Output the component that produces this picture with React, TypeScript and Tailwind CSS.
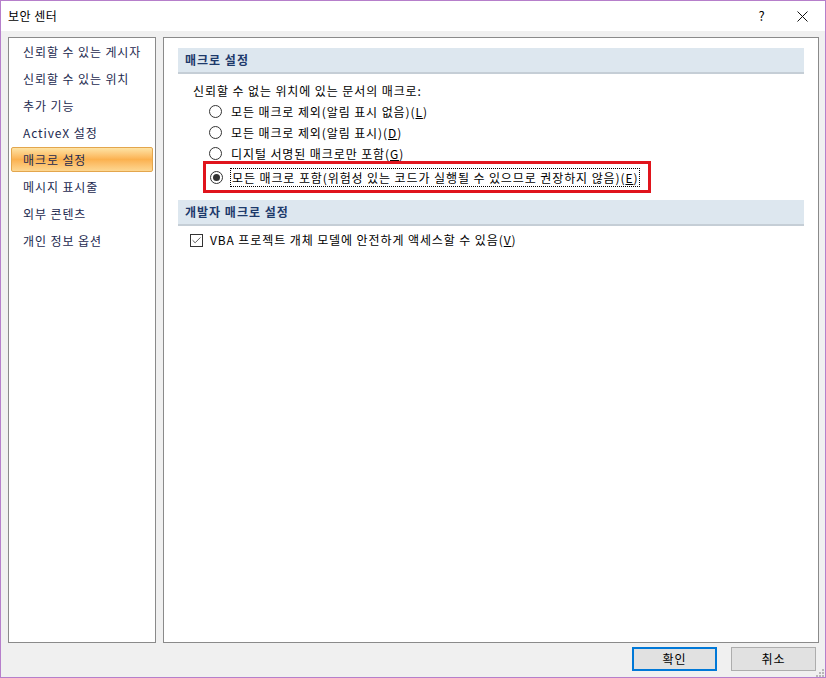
import { Check } from "lucide-react";

const navItems = [
  "신뢰할 수 있는 게시자",
  "신뢰할 수 있는 위치",
  "추가 기능",
  "ActiveX 설정",
  "매크로 설정",
  "메시지 표시줄",
  "외부 콘텐츠",
  "개인 정보 옵션",
];

const options = [
  { label: "모든 매크로 제외(알림 표시 없음)", key: "L" },
  { label: "모든 매크로 제외(알림 표시)", key: "D" },
  { label: "디지털 서명된 매크로만 포함", key: "G" },
];

function Radio({ checked }: { checked?: boolean }) {
  return (
    <span className="w-[13px] h-[13px] rounded-full border border-[#333] bg-white flex items-center justify-center shrink-0">
      {checked && <span className="w-[7px] h-[7px] rounded-full bg-[#333]" />}
    </span>
  );
}

function SectionHeader({ title }: { title: string }) {
  return (
    <div className="h-[26px] bg-[#dde7ef] border-b-2 border-[#c5ced6] flex items-center pl-[7px] text-[12px] font-bold text-[#1d3a6b] tracking-[1px]">
      {title}
    </div>
  );
}

export default function App() {
  return (
    <div
      className="w-[826px] h-[678px] border border-[#b67fcb] bg-[#f0f0f0] flex flex-col text-[12px] text-black tracking-[0.9px]"
      style={{ fontFamily: '"Noto Sans CJK KR", "Noto Sans", sans-serif' }}
    >
      {/* Title bar */}
      <div className="h-[30px] bg-white flex items-center pl-[7px] shrink-0">
        <span className="text-[12px] tracking-[0.5px]">보안 센터</span>
        <span className="ml-auto w-[34px] text-center text-[13px]">?</span>
        <span className="w-[46px] flex justify-center">
          <svg width="11" height="11" viewBox="0 0 11 11">
            <path d="M0.5 0.5 L10.5 10.5 M10.5 0.5 L0.5 10.5" stroke="#111" strokeWidth="1" />
          </svg>
        </span>
      </div>

      {/* Body */}
      <div className="flex-1 flex gap-[7px] pl-[7px] pr-[6px] pt-[6px]">
        <div className="w-[148px] h-[606px] bg-white border border-[#8a8a8a] px-[2px]">
          {navItems.map((item) =>
            item === "매크로 설정" ? (
              <div
                key={item}
                className="h-[25px] my-[1px] rounded-[2px] border border-[#e3a64d] bg-gradient-to-b from-[#fde3a4] via-[#fbb14f] to-[#fdd791] flex items-center pl-[11px] text-[#1d2a4f]"
              >
                {item}
              </div>
            ) : (
              <div key={item} className="h-[27px] flex items-center pl-[12px] text-[#1d2a4f]">
                {item}
              </div>
            )
          )}
        </div>

        <div className="flex-1 h-[606px] bg-white border border-[#8a8a8a] pt-[10px] pl-[14px] pr-[14px]">
          <SectionHeader title="매크로 설정" />
          <div className="pl-[15px] pt-[6px]">
            <div className="h-[21px] flex items-center">신뢰할 수 없는 위치에 있는 문서의 매크로:</div>
            {options.map((o) => (
              <div key={o.key} className="h-[21px] flex items-center gap-[9px] pl-[16px]">
                <Radio />
                <span>
                  {o.label}(<span className="underline">{o.key}</span>)
                </span>
              </div>
            ))}
            <div className="ml-[10px] w-[448px] h-[32px] border-[3px] border-[#e0141c] flex items-center gap-[7px] pl-[4px] -mt-[3px]">
              <Radio checked />
              <span className="border border-dotted border-black px-[1px] leading-[17px]">
                모든 매크로 포함(위험성 있는 코드가 실행될 수 있으므로 권장하지 않음)(<span className="underline">E</span>)
              </span>
            </div>
          </div>

          <div className="mt-[7px]">
            <SectionHeader title="개발자 매크로 설정" />
          </div>
          <div className="pl-[12px] pt-[5px] flex items-center gap-[7px]">
            <span className="w-[13px] h-[13px] border border-[#333] bg-white flex items-center justify-center">
              <Check size={11} strokeWidth={1.6} color="#222" />
            </span>
            <span>
              VBA 프로젝트 개체 모델에 안전하게 액세스할 수 있음(<span className="underline">V</span>)
            </span>
          </div>
        </div>
      </div>

      {/* Buttons */}
      <div className="h-[35px] flex items-start justify-end gap-[14px] pr-[9px] pt-[4px] shrink-0 relative">
        <button className="w-[85px] h-[24px] bg-[#e1e1e1] border-2 border-[#0078d7] text-[12px]">확인</button>
        <button className="w-[85px] h-[24px] bg-[#e1e1e1] border border-[#adadad] text-[12px]">취소</button>
        <div className="absolute right-[1px] bottom-[1px] grid grid-cols-3 gap-[1px]">
          {[0, 0, 1, 0, 1, 1, 1, 1, 1].map((v, i) => (
            <span key={i} className={`w-[2px] h-[2px] ${v ? "bg-[#b8b8b8]" : "bg-transparent"}`} />
          ))}
        </div>
      </div>
    </div>
  );
}
